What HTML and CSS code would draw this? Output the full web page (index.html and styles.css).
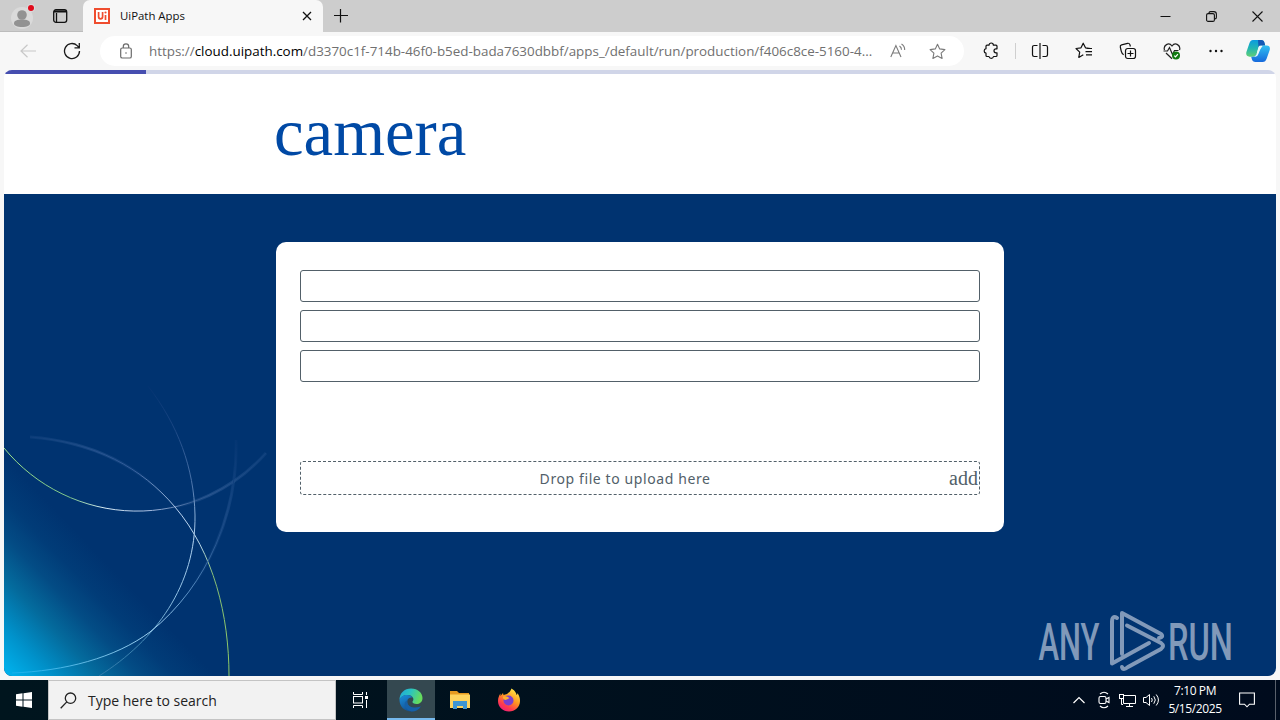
FILE: index.html
```html
<!DOCTYPE html>
<html lang="en">
<head>
    <meta charset="UTF-8">
    <meta name="viewport" content="width=device-width, initial-scale=1.0">
    <title>UiPath Apps</title>
    <link rel="stylesheet" href="styles.css">
</head>
<body>
    <div class="titlebar">
        <div class="workspace">
            <svg class="avatar" width="30" height="28" viewBox="0 0 30 28">
                <circle cx="15" cy="14" r="11" fill="#dadada"/>
                <circle cx="15" cy="11" r="4.8" fill="#929292"/>
                <path d="M7 19.500c0-3 3-4 8-4s8 1 8 4c0 2-3 3.500-8 3.500s-8-1.500-8-3.500z" fill="#929292"/>
                <circle cx="24" cy="4" r="4" fill="#dadada"/>
                <circle cx="24" cy="4" r="3" fill="#e00b1c"/>
            </svg>
            <svg class="tab-actions" width="16" height="16" viewBox="0 0 16 16" fill="none" stroke="#111" stroke-width="1.3">
                <rect x="1.7" y="1.7" width="13" height="12.6" rx="2.3"/>
                <path d="M2 3.400h12.500" stroke-width="2.2"/>
                <path d="M4.500 5v9"/>
            </svg>
        </div>
        <div class="tab">
            <svg width="16" height="16" viewBox="0 0 16 16">
                <rect x="1" y="1" width="14" height="14" fill="#fff" stroke="#ef4d2f" stroke-width="2"/>
                <path d="M4.6 4v4.8a2 2 0 0 0 4 0V4M11.5 7v5" fill="none" stroke="#ef4d2f" stroke-width="1.7"/>
                <circle cx="11.5" cy="4.5" r="1.1" fill="#ef4d2f"/>
            </svg>
            <span class="tab-title">UiPath Apps</span>
            <svg width="10" height="10" viewBox="0 0 10 10" stroke="#111" stroke-width="1.3">
                <path d="M1 1l8 8M9 1l-8 8"/>
            </svg>
        </div>
        <svg class="new-tab" width="14" height="14" viewBox="0 0 14 14" stroke="#111" stroke-width="1.2">
            <path d="M0 6.500h14M6.500 0v13.500"/>
        </svg>
        <div class="window-buttons">
            <svg width="11" height="11" viewBox="0 0 11 11" stroke="#111"><path d="M0.500 5.500h10"/></svg>
            <svg width="11" height="11" viewBox="0 0 11 11" fill="none" stroke="#111" stroke-width="1.1">
                <rect x="0.600" y="2.600" width="7.800" height="7.800" rx="1.500"/>
                <path d="M3 2.200q0-1.600 1.600-1.600h3.200q2.600 0 2.600 2.600v3q0 1.600-1.600 1.800"/>
            </svg>
            <svg width="11" height="11" viewBox="0 0 11 11" stroke="#111" stroke-width="1.100"><path d="M0.500 0.500l10 10M10.500 0.500l-10 10"/></svg>
        </div>
    </div>

    <div class="toolbar">
        <svg class="back" width="16" height="14" viewBox="0 0 16 14" fill="none" stroke="#c8c8c8" stroke-width="1.2">
            <path d="M16 7H1M7.500 0.700L1 7l6.500 6.300"/>
        </svg>
        <svg class="reload" width="18" height="18" viewBox="0 0 18 18" fill="none" stroke="#1a1a1a" stroke-width="1.3">
            <path d="M16.500 9a7.500 7.500 0 1 1-2.300-5.400l1.800 1.900M16.300 1v4.800h-4.800"/>
        </svg>
        <div class="address">
            <svg width="12" height="16" viewBox="0 0 12 16" fill="none" stroke="#6b6b6b" stroke-width="1.2">
                <rect x="0.700" y="5" width="10.600" height="10" rx="1.600"/>
                <path d="M3.300 5V3.500a2.700 2.700 0 0 1 5.400 0V5"/>
                <circle cx="6" cy="10" r="0.800" fill="#6b6b6b" stroke="none"/>
            </svg>
            <span class="url">https://<b>cloud.uipath.com</b>/d3370c1f-714b-46f0-b5ed-bada7630dbbf/apps_/default/run/production/f406c8ce-5160-4...</span>
            <svg class="read-aloud" width="16" height="16" viewBox="0 0 16 16" fill="none" stroke="#7a7a7a" stroke-width="1.1">
                <path d="M0.800 14L5.900 2.500 11 14M2.600 10h6.600M9.500 3q2 1.300 2 3.800M11.500 1q3.300 2 3.200 6"/>
            </svg>
            <svg width="17" height="17" viewBox="0 0 17 17" fill="none" stroke="#7a7a7a" stroke-width="1.100" stroke-linejoin="round">
                <path d="M8.500 1.200l2.200 4.700 5.200.7-3.800 3.600 1 5.200-4.600-2.500-4.600 2.500 1-5.200L1.100 6.600l5.200-.7z"/>
            </svg>
        </div>
        <div class="tools">
            <svg width="18" height="18" viewBox="0 0 18 18" fill="none" stroke="#111" stroke-width="1.200" stroke-linejoin="round">
                <path d="M5 3.200h2a2.200 2.200 0 0 1 4.400 0h2.600q1 0 1 1v2.600h-1a2 2 0 0 0 0 4h1v2.700q0 1-1 1h-2.500a2.300 2.300 0 0 1-4.500 0H5q-1 0-1-1v-2.300a2.300 2.300 0 0 1 0-4.500V4.200q0-1 1-1z"/>
            </svg>
            <span class="divider"></span>
            <svg width="18" height="18" viewBox="0 0 18 18" fill="none" stroke="#111" stroke-width="1.200">
                <path d="M6.500 3.500H3.200q-1.700 0-1.700 1.700v7.600q0 1.700 1.700 1.700h3.300M11.500 3.500h3.300q1.700 0 1.700 1.700v7.600q0 1.700-1.700 1.700h-3.300M9 1v16"/>
            </svg>
            <svg width="18" height="18" viewBox="0 0 18 18" fill="none" stroke="#111" stroke-width="1.200" stroke-linejoin="round">
                <path d="M15.500 6.500l-5-.7-2.300-4.600L6 5.800l-5 .7 3.700 3.600-.9 5.300 4.500-2.600M11.500 6.500h5.500M10.500 9.700H17M11 12.900h6"/>
            </svg>
            <svg width="18" height="18" viewBox="0 0 18 18" fill="none" stroke="#111" stroke-width="1.200">
                <rect x="6.500" y="6.500" width="10" height="10" rx="2.200"/>
                <path d="M11.500 8.500v6M8.500 11.500h6M4.700 12.700C2.900 12 2.700 11 2.300 9.300L1.300 5q-.4-1.700 1.300-2.200l6-1.500q1.700-.3 2.300 1.300l.5 1.900"/>
            </svg>
            <svg width="18" height="18" viewBox="0 0 18 18" fill="none" stroke="#222" stroke-width="1.200">
                <path d="M1.500 8C0 3.500 5.700-.5 9 4c3.300-4.500 9-.5 7.500 4M0.500 9h4l2-3.500 3 7 2-4h4M3 11l6 5.800"/>
                <circle cx="13" cy="13.500" r="4" fill="#117a11" stroke="none"/>
                <path d="M11.200 13.600l1.300 1.200 2.400-2.600" stroke="#fff"/>
            </svg>
            <svg width="18" height="18" viewBox="0 0 18 18" fill="#111">
                <circle cx="3.500" cy="9" r="1.200"/><circle cx="9" cy="9" r="1.200"/><circle cx="14.500" cy="9" r="1.200"/>
            </svg>
        </div>
        <svg class="copilot" width="24" height="24" viewBox="0 0 24 24">
            <defs>
                <linearGradient id="pilotLeft" x1="0" y1="0" x2="0" y2="1">
                    <stop offset="0" stop-color="#0a9be0"/><stop offset="0.500" stop-color="#22b6b2"/><stop offset="1" stop-color="#62cf75"/>
                </linearGradient>
                <linearGradient id="pilotRight" x1="0" y1="0" x2="0" y2="1">
                    <stop offset="0" stop-color="#2fc1f2"/><stop offset="1" stop-color="#1669dc"/>
                </linearGradient>
            </defs>
            <path d="M7 1h8q3 0 3.500 3l.7 2.500h-4q-2 0-2.700 2.300L10.600 15q-.8 2.700-3.500 2.700H3.500Q-.6 17.500.4 13L3.500 4Q4.500 1 7 1z" fill="url(#pilotLeft)"/>
            <path d="M12 1h3q3 0 3.500 3l.7 2.500h-4q-2 0-2.700 2.300z" fill="#1459b5"/>
            <path d="M17 6.500h3.700q4 .3 3 4.500l-3 8.500q-1.200 3.500-4 3.500H9.500q-3 0-3.700-3l-.6-2.300h2q2.600 0 3.400-2.700z" fill="url(#pilotRight)"/>
            <path d="M13.500 6.800h2.200L12.400 15q-.9 2.500-2.900 2.700H8q2-.2 2.700-2.600l1.500-6.200q.4-1.800 1.300-2.100z" fill="#e8fafa"/>
        </svg>
    </div>

    <div class="page">
        <div class="progress"><div class="progress-bar"></div></div>
        <header class="app-header">
            <h1>camera</h1>
        </header>
        <main class="app-body">
            <!-- Curved light trails in the corner -->
            <svg class="trails" width="290" height="310" viewBox="4 366 290 310" fill="none">
                <defs>
                    <linearGradient id="trailA" gradientUnits="userSpaceOnUse" x1="4" y1="0" x2="268" y2="0">
                        <stop offset="0" stop-color="#9be08a"/><stop offset="0.250" stop-color="#7cc48a"/><stop offset="0.380" stop-color="#d8ecf5"/><stop offset="0.550" stop-color="#a6bce0"/><stop offset="0.720" stop-color="#315a92"/><stop offset="1" stop-color="#12427f"/>
                    </linearGradient>
                    <linearGradient id="trailB" gradientUnits="userSpaceOnUse" x1="28" y1="437" x2="229" y2="676">
                        <stop offset="0" stop-color="#0f3e7a"/><stop offset="0.300" stop-color="#365f9d"/><stop offset="0.500" stop-color="#bcd5f2"/><stop offset="0.620" stop-color="#b8d6e8"/><stop offset="0.720" stop-color="#86bd75"/><stop offset="1" stop-color="#8fcb64"/>
                    </linearGradient>
                    <linearGradient id="trailC" gradientUnits="userSpaceOnUse" x1="0" y1="386" x2="0" y2="676">
                        <stop offset="0" stop-color="#043371"/><stop offset="0.150" stop-color="#1b4784"/><stop offset="0.350" stop-color="#5279ae"/><stop offset="0.520" stop-color="#b5d5f2"/><stop offset="0.750" stop-color="#8bbde1"/><stop offset="0.900" stop-color="#3d83b0"/><stop offset="1" stop-color="#2f7aa9"/>
                    </linearGradient>
                    <linearGradient id="trailD" gradientUnits="userSpaceOnUse" x1="236" y1="440" x2="12" y2="673">
                        <stop offset="0" stop-color="#063674"/><stop offset="0.250" stop-color="#1f4f8c"/><stop offset="0.450" stop-color="#5a8fc3"/><stop offset="0.600" stop-color="#a3d3f3"/><stop offset="0.800" stop-color="#68b9e3"/><stop offset="1" stop-color="#17b0ec"/>
                    </linearGradient>
                    <!-- wide strokes fade out at both ends -->
                    <linearGradient id="hazeA" gradientUnits="userSpaceOnUse" x1="170" y1="0" x2="268" y2="0">
                        <stop offset="0" stop-color="#2c5a94" stop-opacity="0"/><stop offset="0.400" stop-color="#2c5a94" stop-opacity="0.600"/><stop offset="1" stop-color="#2c5a94" stop-opacity="0.250"/>
                    </linearGradient>
                    <linearGradient id="hazeB" gradientUnits="userSpaceOnUse" x1="28" y1="0" x2="165" y2="0">
                        <stop offset="0" stop-color="#2c5a94" stop-opacity="0.200"/><stop offset="0.500" stop-color="#2c5a94" stop-opacity="0.500"/><stop offset="1" stop-color="#2c5a94" stop-opacity="0"/>
                    </linearGradient>
                    <linearGradient id="hazeD" gradientUnits="userSpaceOnUse" x1="0" y1="440" x2="0" y2="590">
                        <stop offset="0" stop-color="#2c5a94" stop-opacity="0.050"/><stop offset="0.500" stop-color="#2c5a94" stop-opacity="0.450"/><stop offset="1" stop-color="#2c5a94" stop-opacity="0"/>
                    </linearGradient>
                </defs>
                <path d="M4 448A172 172 0 0 0 266 453" stroke="url(#hazeA)" stroke-width="3"/>
                <path d="M30 437C95 442 142 468 175 507" stroke="url(#hazeB)" stroke-width="3"/>
                <path d="M236 440C238 510 209 585 150 632" stroke="url(#hazeD)" stroke-width="3"/>
                <path d="M4 448A172 172 0 0 0 266 453" stroke="url(#trailA)"/>
                <path d="M30 437C95 442 142 468 175 507C214 553 229 616 229 676" stroke="url(#trailB)"/>
                <path d="M148 386C178 425 194 468 195 515C196 585 156 640 99 676" stroke="url(#trailC)"/>
                <path d="M236 440C238 510 209 585 150 632C115 658 65 671 12 673" stroke="url(#trailD)"/>
            </svg>
            <div class="card">
                <input class="field" type="text">
                <input class="field" type="text">
                <input class="field" type="text">
                <div class="dropzone">
                    <span class="drop-text">Drop file to upload here</span>
                    <span class="add">add</span>
                </div>
            </div>
            <svg class="watermark" width="241" height="66" viewBox="0 0 241 66">
                <g class="watermark-text">
                    <text x="3.500" y="53" textLength="61" lengthAdjust="spacingAndGlyphs">ANY</text>
                    <text x="133" y="53" textLength="65" lengthAdjust="spacingAndGlyphs">RUN</text>
                </g>
                <g fill="none" stroke="#8199b9" stroke-width="4" stroke-linejoin="round" stroke-linecap="round">
                    <path d="M82 11q-5-3-5 4v41.500L114 36"/>
                    <path d="M87 47V6l39 21q3 3-2 4"/>
                    <path d="M87 60q1 4 6 0l33-18q4-3 0-6L92 18.500"/>
                </g>
            </svg>
        </main>
    </div>

    <div class="taskbar">
        <div class="start">
            <svg width="16" height="16" viewBox="0 0 16 16" fill="#fff">
                <path d="M0 2.200l6.500-.9v6.200H0zM7.500 1.200L16 0v7.500H7.500zM0 8.500h6.500v6.200L0 13.800zM7.500 8.500H16V16l-8.500-1.200z"/>
            </svg>
        </div>
        <div class="search">
            <svg width="17" height="17" viewBox="0 0 17 17" fill="none" stroke="#222" stroke-width="1.300">
                <circle cx="10.500" cy="6.200" r="5.200"/><path d="M6.800 9.900L0.700 16.200"/>
            </svg>
            <span>Type here to search</span>
        </div>
        <div class="task task-view">
            <svg width="17" height="16" viewBox="0 0 17 16" fill="none" stroke="#fff">
                <path d="M1.500 0v2.500h9V0M1.500 16v-2.500h9V16M14.500 0v3M14.500 8v8"/>
                <rect x="1.500" y="4.500" width="9" height="6.500"/>
                <path d="M13 5.500h3" stroke-width="3"/>
            </svg>
        </div>
        <div class="task active">
            <svg width="24" height="24" viewBox="0 0 24 24">
                <defs>
                    <linearGradient id="edgeTop" x1="0" y1="0" x2="1" y2="0.300">
                        <stop offset="0" stop-color="#1fa6dc"/><stop offset="0.500" stop-color="#2bc4c0"/><stop offset="1" stop-color="#66dc5d"/>
                    </linearGradient>
                    <linearGradient id="edgeLow" x1="0" y1="0" x2="0.600" y2="1">
                        <stop offset="0" stop-color="#1a8fdc"/><stop offset="1" stop-color="#114a8d"/>
                    </linearGradient>
                </defs>
                <path d="M.5 12C.5 5 5.500.5 12 .5c7 0 11.500 4.500 11.500 9.500 0 4-3 6-6 6-2.500 0-4.500-1-4-2.500 2-1.500 1-6.500-5-6.500-4 0-7 2-8 5z" fill="url(#edgeTop)"/>
                <path d="M.5 12c1-3.500 4-5 7.500-5 3 0 5 1.200 5.700 2.700C9 8.500 7 13 9 16.500c2.500 4 8.500 4.500 13 1.800C20 21.500 16.500 23.500 12.500 23.500 5.500 23.500.5 18.500.5 12z" fill="url(#edgeLow)"/>
                <path d="M8.500 12c-1.800 6 5 9.500 13.200 6.500-2 3.200-5 5-9 5C6 22 3 15 8.500 12z" fill="#1660a8"/>
            </svg>
        </div>
        <div class="task">
            <svg width="22" height="20" viewBox="0 0 22 20">
                <path d="M1 1h7l2 2h10v6H1z" fill="#e79b20"/>
                <path d="M1 4.500h20V18H1z" fill="#ffd45e"/>
                <path d="M4 19v-8h14v8h-4v-3H8v3z" fill="#3f96d2"/>
            </svg>
        </div>
        <div class="task">
            <svg width="24" height="24" viewBox="0 0 24 24">
                <defs>
                    <linearGradient id="fox" x1="0.800" y1="0" x2="0.200" y2="1">
                        <stop offset="0" stop-color="#fff04a"/><stop offset="0.450" stop-color="#ff9421"/><stop offset="0.750" stop-color="#ff3b4e"/><stop offset="1" stop-color="#ee197f"/>
                    </linearGradient>
                </defs>
                <path d="M14.500.5c4 2.500 5 5 5 6.500 1-.5 1-1.500 1-2 2 3 2.500 5.500 2.500 8 0 6-5 10.500-11 10.500S1 19 1 13c0-3 1-5.500 2.500-7.500V8L6 5l.5 2L10 6c1.500-1 3.500-2.500 4.500-5.500z" fill="url(#fox)"/>
                <circle cx="11.500" cy="12.500" r="5" fill="#7a3fd0"/>
                <path d="M6 8.500c3-1 5 .3 6.500 1.500-1.500 1.500-3 1-3.500 2-2 0-3.500-1.500-3-3.500z" fill="#ffae2e"/>
            </svg>
        </div>
        <div class="tray">
            <svg width="12" height="8" viewBox="0 0 12 8" fill="none" stroke="#fff" stroke-width="1.200"><path d="M0.500 7L6 1.500 11.500 7"/></svg>
            <svg class="meet" width="12" height="18" viewBox="0 0 12 18" fill="none" stroke="#fff" stroke-width="1.100">
                <rect x="1" y="5.500" width="7" height="7" rx="1.500"/>
                <path d="M8 8l3-1.500v5L8 10M2 3q4-3.500 8 0M2 15q4 3.500 8 0"/>
            </svg>
            <svg width="17" height="16" viewBox="0 0 17 16" fill="none" stroke="#fff">
                <path d="M5 3.500h11.500v8H4.500V7M10.500 11.500v3M7 14.500h7M2.500 7v5.500H4"/>
                <rect x="0.500" y="2.500" width="4" height="4"/>
            </svg>
            <svg width="17" height="14" viewBox="0 0 17 14" fill="none" stroke="#fff">
                <path d="M0.500 4.500h2.500l3.500-3v11l-3.500-3H0.500zM8.500 5q1.500 2 0 4M10.800 3.300q3 3.700 0 7.400M13.200 1.500q4.500 5.500 0 11"/>
            </svg>
        </div>
        <div class="clock">
            <span class="time">7:10 PM</span>
            <span class="date">5/15/2025</span>
        </div>
        <svg class="notifications" width="16" height="16" viewBox="0 0 16 16" fill="none" stroke="#fff" stroke-width="1.100">
            <path d="M0.600 1h14.800v11.200H10.500L8 14.800l-2.500-2.600H0.600z"/>
        </svg>
        <div class="show-desktop"></div>
    </div>
</body>
</html>
```
FILE: styles.css
```css
body {
    font-family: "Open Sans", "Noto Sans", sans-serif;
    margin: 0;
    height: 720px;
    display: flex;
    flex-direction: column;
    overflow: hidden;
    background-color: #f7f7f7;
}

svg {
    display: block;
    flex-shrink: 0;
}

/* Browser tabs */
.titlebar {
    height: 32px;
    display: flex;
    align-items: center;
    background-color: #cdcdcd;
}

.workspace {
    box-sizing: border-box;
    width: 83px;
    height: 32px;
    padding-left: 7px;
    display: flex;
    align-items: center;
    gap: 15px;
    border-bottom: 1px solid #bcbcbc;
}

.avatar {
    margin-top: 4px;
}

.tab {
    box-sizing: border-box;
    width: 240px;
    height: 32px;
    padding: 0 11px;
    display: flex;
    align-items: center;
    background-color: #f7f7f7;
    border-radius: 7px 7px 0 0;
}

.tab-title {
    flex: 1;
    margin-left: 10px;
    padding-bottom: 1px;
    font-size: 11.4px;
    color: #111;
}

.new-tab {
    margin-left: 11px;
}

.window-buttons {
    display: flex;
    gap: 35px;
    margin-left: auto;
    padding-right: 17px;
}

/* Navigation bar */
.toolbar {
    height: 38px;
    display: flex;
    align-items: center;
    background-color: #f7f7f7;
}

.back {
    margin-left: 20px;
}

.reload {
    margin: 0 27px;
}

.address {
    box-sizing: border-box;
    width: 864px;
    height: 30px;
    margin-left: -8px;
    padding: 0 17px 0 20px;
    display: flex;
    align-items: center;
    background-color: #fff;
    border-radius: 15px;
}

.url {
    width: 724px;
    margin-left: 17px;
    font-size: 13.4px;
    white-space: nowrap;
    color: #707070;
}

.url b {
    font-weight: normal;
    color: #000;
}

.read-aloud {
    margin: 0 23px 0 17px;
}

.tools {
    display: flex;
    align-items: center;
    gap: 26px;
    margin-left: 18px;
}

.divider {
    width: 1px;
    height: 16px;
    margin: 0 -11px;
    background-color: #cfcfcf;
}

.copilot {
    margin-left: 21px;
}

/* App page */
.page {
    height: 606px;
    margin: 0 4px 4px;
    display: flex;
    flex-direction: column;
    background-color: #fff;
    border-radius: 8px;
    overflow: hidden;
}

.progress {
    height: 4px;
    background-color: #d0d5e8;
}

.progress-bar {
    width: 142px;
    height: 4px;
    background-color: #464eb0;
}

.app-header {
    box-sizing: border-box;
    height: 120px;
    padding: 0 0 3px 270px;
    display: flex;
    align-items: center;
}

.app-header h1 {
    margin: 0;
    font-family: "Liberation Serif", serif;
    font-size: 50pt;
    font-weight: normal;
    line-height: 82px;
    color: #0049a5;
}

.app-body {
    position: relative;
    flex: 1;
    background-color: #003370;
}

.trails {
    position: absolute;
    left: 0;
    bottom: 0;
    background: linear-gradient(46deg, #00b5f0 0%, #0092cb 8%, #046b9d 16%, #034c85 23%, #013c78 29%, #003370 36%);
}

.card {
    position: relative;
    box-sizing: border-box;
    width: 728px;
    height: 290px;
    margin: 48px auto 0;
    padding: 28px 24px;
    display: flex;
    flex-direction: column;
    gap: 8px;
    background-color: #fff;
    border-radius: 10px;
}

.field {
    box-sizing: border-box;
    height: 32px;
    border: 1px solid #526069;
    border-radius: 3px;
    background-color: #fff;
}

.dropzone {
    box-sizing: border-box;
    height: 34px;
    margin-top: 71px;
    padding-right: 1px;
    display: flex;
    align-items: center;
    border: 1px dashed #526069;
    border-radius: 3px;
    color: #526069;
}

.drop-text {
    flex: 1;
    text-align: center;
    font-family: "Noto Sans", sans-serif;
    font-size: 14px;
    letter-spacing: 0.6px;
}

.add {
    font-family: "Liberation Serif", serif;
    font-size: 20px;
}

.watermark {
    position: absolute;
    right: 0;
    bottom: 3px;
}

.watermark-text {
    font-family: Roboto, sans-serif;
    font-size: 52px;
    font-weight: 500;
    fill: #8199b9;
}

/* Taskbar */
.taskbar {
    height: 40px;
    display: flex;
    align-items: center;
    background: linear-gradient(to right, #00151e, #000b1d);
    color: #fff;
}

.start,
.task {
    width: 48px;
    height: 40px;
    display: flex;
    align-items: center;
    justify-content: center;
}

.task {
    width: 49px;
}

.task-view {
    box-sizing: border-box;
    padding-right: 5px;
}

.task.active {
    box-sizing: border-box;
    width: 48px;
    padding-top: 2px;
    border-bottom: 2px solid #76b9ed;
    background-color: #344850;
}

.search {
    box-sizing: border-box;
    width: 288px;
    height: 40px;
    margin-right: 2px;
    padding-left: 11px;
    display: flex;
    align-items: center;
    gap: 11px;
    border: 1px solid #c4c4c4;
    background-color: #f2f2f2;
    font-size: 14px;
    color: #222;
}

.tray {
    display: flex;
    align-items: center;
    gap: 7px;
    margin-left: auto;
}

.meet {
    margin: 0 2px 0 6px;
}

.clock {
    width: 70px;
    margin: 0 9px 0 0;
    display: flex;
    flex-direction: column;
    align-items: center;
    font-size: 12px;
    line-height: 18px;
    letter-spacing: -0.4px;
}

.show-desktop {
    width: 4px;
    height: 40px;
    margin-left: 20px;
    border-left: 1px solid #59606b;
}
```
